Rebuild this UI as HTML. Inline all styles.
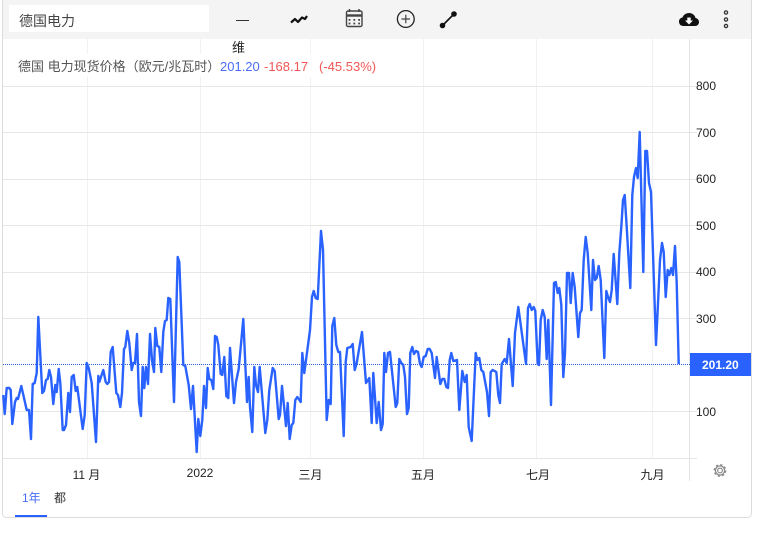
<!DOCTYPE html>
<html lang="zh"><head><meta charset="utf-8"><style>
html,body{margin:0;padding:0;background:#fff}
body{width:760px;height:533px;overflow:hidden;position:relative;font-family:"Liberation Sans","Noto Sans CJK SC",sans-serif;color:#333}
.a{position:absolute;white-space:nowrap}
</style></head><body>
<svg class="a" style="left:0;top:0" width="760" height="533" viewBox="0 0 760 533" font-family="'Liberation Sans','Noto Sans CJK SC',sans-serif">
<rect x="2.5" y="-5" width="749" height="522.5" rx="4" fill="#fff" stroke="#dcdcdc"/>
<rect x="3" y="0" width="748" height="39" fill="#f4f4f4"/>
<rect x="9" y="5" width="200" height="27" fill="#fff"/>
<g stroke="#f0f1f4"><path d="M87.5 39V458M200.5 39V458M310.5 39V458M423.5 39V458M536.5 39V458M652.5 39V458"/></g>
<g stroke="#e6e6e6"><path d="M3 86.5H697M3 132.5H697M3 179.5H697M3 225.5H697M3 272.5H697M3 318.5H697M3 411.5H697M3 458.5H697"/></g>
<path d="M689.5 39V481" stroke="#e3e3e3"/>
<rect x="3" y="54" width="395" height="23" fill="#fff"/>
<path d="M3 364.5H690" stroke="#2d5fd8" stroke-dasharray="1 1" fill="none"/>
<polyline fill="none" stroke="#2962ff" stroke-width="2.4" stroke-linejoin="round" points="3.3,395 4.7,414 6.7,388 9.3,388 10.7,390 12.3,424 15,402 16.7,398 18,399 21.3,386 26.7,410 29,410 31,439 32.7,384 34.7,383 36.7,373 38.3,317 42.3,393 44,391 46,380 47.7,379 49.3,370 51,377 53.3,404 55.3,385 56.7,392 58.7,369 60.3,383 62.7,430 64,430 66,425 68.3,393 70,412 71.7,377 73.7,375 75.7,391 77.3,387 82.7,429 84.7,415 86.7,363 88.7,368 91.7,383 96,442 98.3,376 99.3,382 103.3,370 105.7,382 107.3,384 109,382 110.7,352 112.7,347 116.3,393 118,395 120.3,407 122,393 124,349 125.3,347 127.3,331 129.3,343 131.7,370 133.3,363 135,363 137,334 139,402 141,416 142.7,367 144.3,388 146,367 148,384 150,334 152,360 154,372 155.3,328 157.3,346 159.3,347 161.3,372 163.3,332 165,321 166.7,320 168.3,298 170.3,299 174,402 177.7,257 179.3,262 183.3,365 185.3,366 188.7,385 191,409 193,386 196.7,452 198.3,419 200.3,436 202.3,420 204,386 206,408 207.7,368 209.3,379 211.3,380 213.3,389 215,336 216.7,337 218.3,345 220.7,374 222.3,375 224.3,357 226.3,396 228.3,398 230,348 234,403 236,382 238.7,369 243.3,319 247,402 248.7,377 250,407 252.3,432 254.3,367 256,385 258,392 259.7,367 265.3,433 267.3,420 269.3,390 272.7,368 274.7,371 278.7,419 280,415 282,386 286,426 287.7,403 289.7,439 291.7,425 293.3,423 295.3,400 297.3,397 300.7,402 302.3,353 304.3,373 310,330 312,297 313.7,291 315.7,298 317.7,299 321,231 323,250 326.7,420 328.7,400 330.7,404 332.3,326 334.3,318 336.3,345 338.3,352 340,352 343.7,436 345.7,362 347.3,348 350.7,347 352.7,344 354.7,370 356.7,363 362,332 366,383 369.3,378 371.7,423 373.3,373 376.7,423 378.7,402 381,430 382.7,424 384.3,353 386,372 388,353 390,352 395.7,407 397.3,403 399.3,359 401.3,363 403.3,365 405,377 407,414 408.7,408 410.3,353 412.3,347 414,354 416,351 418,352 420,364 421.7,367 423.7,357 425.7,356 427.7,349 429.7,349 431.7,353 435,378 436.7,357 440.3,384 442.3,379 444.3,379 446.3,387 448,388 449.7,360 451.3,353 453.3,361 457,360 459.3,410 462.3,371 464.7,382 466.7,375 468.7,427 471.7,441 475.7,353 477.3,360 479.3,358 481.3,370 483.3,372 487,392 489,416 490.7,372 492.7,370 496.3,372 498.3,395 500,403 501.7,364 504.7,359 506.7,363 509,339 512.7,386 515,333 518.3,307 526,364 528,308 529.7,304 531.7,310 533.7,307 535.3,311 537.7,364 539,365 540.7,320 542.7,310 544.7,317 546.7,359 548.3,320 551,405 554,283 555.7,282 557.7,293 559.3,288 561.3,305 563.3,377 565,353 567,273 569,273 570.7,303 572.7,273 574.7,287 578.3,337 580,313 581.7,310 583.7,260 585.7,237 587.7,253 591.3,310 593,260 595,280 596.7,278 598.7,266 600.7,280 604.3,358 606.3,291 608,297 610,302 611.7,290 613.7,254 617.3,304 619.3,253 621.3,227 623,200 624.7,195 626.7,227 630.3,288 632.3,195 634,177 636,168 637.7,178 639.7,132 643.3,272 645.3,151 647,151 649,183 651,192 656,345 658.3,297 660,260 662,243 663.7,252 665.7,297 667.7,270 669.3,275 671.3,268 673,275 675,246 676.7,283 678.7,364"/>
<text x="232" y="52" font-size="13" fill="#222">维</text>
<text x="18" y="71" font-size="13" fill="#555">德国 电力现货价格（欧元/兆瓦时）</text>
<text x="220" y="71" font-size="13" fill="#4a6cf7">201.20</text>
<text x="264" y="71" font-size="13" fill="#f25555">-168.17</text>
<text x="319" y="71" font-size="13" fill="#f25555">(-45.53%)</text>
<text x="19" y="26" font-size="14" fill="#444">德国电力</text>
<g font-size="12" fill="#222"><text x="696" y="90">800</text><text x="696" y="137">700</text><text x="696" y="183">600</text><text x="696" y="230">500</text><text x="696" y="276">400</text><text x="696" y="323">300</text><text x="696" y="416">100</text></g>
<rect x="690" y="353" width="61" height="23" fill="#2962ff"/>
<text x="702" y="369" font-size="12" font-weight="700" fill="#fff">201.20</text>
<g font-size="12" fill="#222" text-anchor="middle"><text x="86.5" y="479">11 月</text><text x="200" y="477">2022</text><text x="310.5" y="479">三月</text><text x="423" y="479">五月</text><text x="538" y="479">七月</text><text x="652.5" y="479">九月</text></g>
<text x="22" y="502" font-size="12" fill="#4a6cf7">1年</text>
<text x="54" y="502" font-size="12" fill="#333">都</text>
<rect x="15" y="515" width="32" height="2" fill="#2962ff"/>
<!-- toolbar icons -->
<path d="M236 20.5H249" stroke="#333" stroke-width="1"/>
<path d="M291 22.5L295 19L298 22L302 17.5L305 19L307 16" fill="none" stroke="#111" stroke-width="2.2" stroke-linejoin="round"/>
<g fill="none" stroke="#444" stroke-width="1.4"><rect x="346.5" y="11" width="15.5" height="15.5" rx="1.5"/><path d="M346.5 15.5H362" stroke-width="2.4"/><path d="M349.5 9V12M359 9V12" stroke-width="1.5"/></g>
<path d="M348.6 19h1.8v1.8h-1.8zM353.4 19h1.8v1.8h-1.8zM358.2 19h1.8v1.8h-1.8zM348.6 22.6h1.8v1.8h-1.8zM353.4 22.6h1.8v1.8h-1.8zM358.2 22.6h1.8v1.8h-1.8z" fill="#444"/>
<circle cx="405.8" cy="19" r="8.4" fill="none" stroke="#222" stroke-width="1.3"/>
<path d="M401.5 19H410M405.8 14.8V23.2" stroke="#444" stroke-width="1.2"/>
<path d="M442.5 25.5L454 14" stroke="#111" stroke-width="1.6"/>
<circle cx="442.5" cy="25.5" r="2.8" fill="#111"/><circle cx="454" cy="14" r="2.8" fill="#111"/>
<path d="M683.5 26C680.5 26 679 24 679 21.5C679 19.3 680.5 17.8 682.5 17.5C683.5 14.8 686 13 689 13C692.5 13 695 15.3 695.5 18C697.5 18.3 699 20 699 22C699 24.3 697.3 26 695 26Z" fill="#111"/>
<path d="M687.3 17.5H690.7V20.5H693L689 24.5L685 20.5H687.3Z" fill="#fff"/>
<g fill="none" stroke="#333" stroke-width="1.3"><circle cx="726" cy="12.5" r="1.6"/><circle cx="726" cy="19.5" r="1.6"/><circle cx="726" cy="26" r="1.6"/></g>
<!-- gear -->
<g transform="translate(720 470.5)" fill="none" stroke="#8c8c8c"><circle r="2.4" stroke-width="1.2"/><circle r="4.6" stroke-width="1.3"/><circle r="5.6" stroke-width="1.6" stroke-dasharray="2.2 2.2"/></g>
</svg>
</body></html>
